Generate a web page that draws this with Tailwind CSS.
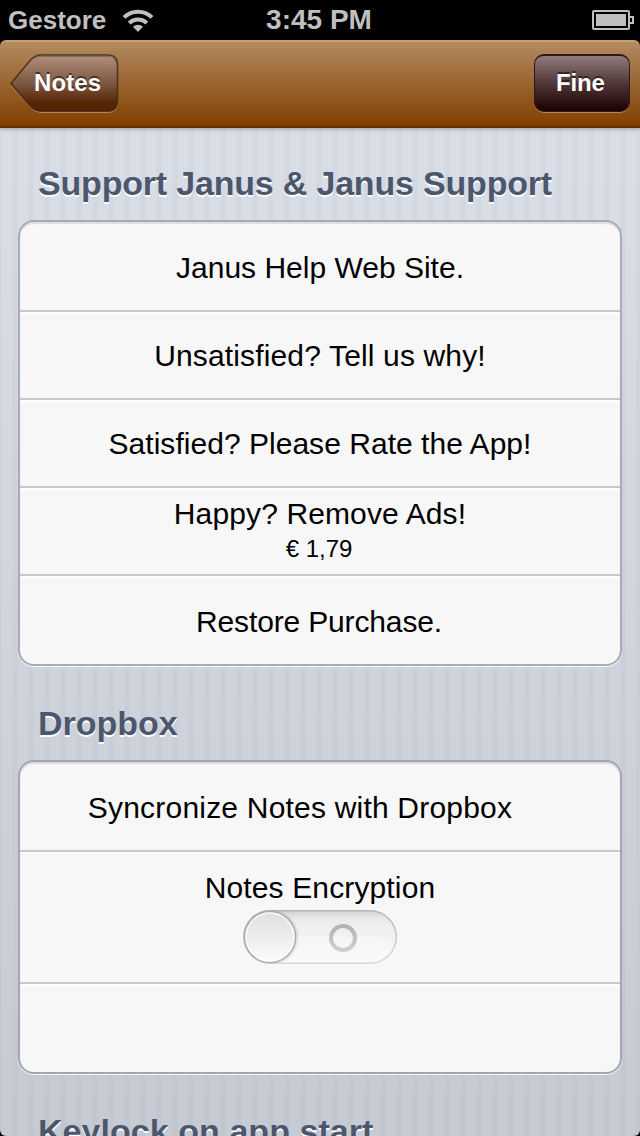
<!DOCTYPE html>
<html lang="it">
<head>
<meta charset="utf-8">
<title>Janus Notes</title>
<script src="https://cdn.jsdelivr.net/npm/@tailwindcss/browser@4"></script>
</head>
<body class="bg-black">
<div class="relative flex h-[1136px] w-[640px] flex-col overflow-hidden bg-black font-['Liberation_Sans',Arial,sans-serif] text-black">
  <!-- Status bar -->
  <header class="grid h-10 shrink-0 grid-cols-3 items-center font-bold text-[#bfbfbf]">
    <div class="flex items-center gap-4 pl-2">
      <span class="text-[26px] leading-10">Gestore</span>
      <svg class="h-[26px] w-8" viewBox="0 0 32 26" fill="none" stroke="#bfbfbf" stroke-width="4">
        <path d="M2 10.400a20 20 0 0 1 28 0"/>
        <path d="M7.200 16.200a12.500 12.500 0 0 1 17.600 0"/>
        <path d="M11 19.800a7.400 7.400 0 0 1 10 0L16 25z" fill="#bfbfbf" stroke="none"/>
      </svg>
    </div>
    <span class="pr-0.5 text-center text-[28px] leading-10 whitespace-nowrap">3:45 PM</span>
    <div class="flex justify-end pr-1.5">
      <svg class="h-5 w-[42px]" viewBox="0 0 42 20">
        <rect x="1" y="1" width="36" height="18" rx="1" fill="none" stroke="#bfbfbf" stroke-width="2"/>
        <rect x="4" y="4" width="30" height="12" fill="#bfbfbf"/>
        <path d="M38 7h3v6h-3" fill="none" stroke="#bfbfbf" stroke-width="2"/>
      </svg>
    </div>
  </header>

  <!-- Navigation bar -->
  <nav class="relative z-10 flex h-[88px] shrink-0 items-start justify-between rounded-t-[6px] border-t-2 border-b-2 border-t-[#c79f77] border-b-[#5f3000] bg-[linear-gradient(#b38a60,#803f00)] pt-3 pr-2.5 pl-2.5 text-2xl font-bold text-white shadow-[0_1px_4px_rgba(0,0,0,0.3)]">
    <div class="relative h-[60px] w-[109px]">
      <svg class="absolute inset-0 h-[60px] w-[109px]" viewBox="0 0 109 60">
        <defs><linearGradient id="back" x1="0" y1="0" x2="0" y2="1"><stop offset="0" stop-color="#b0917e"/><stop offset=".5" stop-color="#7e5742"/><stop offset=".85" stop-color="#562604"/><stop offset="1" stop-color="#532500"/></linearGradient></defs>
        <path d="M1 31.500 20 53Q25 58.500 31 58.500H98Q108 58.500 108 48" fill="none" stroke="#c99562" stroke-opacity=".75"/>
        <path d="M1 29.500 20 6.500Q25 1 31 1H98Q107.500 1 107.500 11V47Q107.500 57 98 57H31Q25 57 20 52Z" fill="url(#back)" stroke="#402817" stroke-opacity=".85" stroke-width="1.500"/>
        <path d="M24 4Q27 2.500 31 2.500H98Q104 2.500 106 8" fill="none" stroke="#402817" stroke-opacity=".35"/>
      </svg>
      <span class="relative block pl-6 leading-[58px] tracking-[0.1px] [text-shadow:0_-2px_0_rgba(0,0,0,0.5)]">Notes</span>
    </div>
    <div class="h-[58px] w-24 rounded-[10px] border border-t-2 border-[#2d181a] bg-[linear-gradient(#8f7c7b,#503636_50%,#1d0000)] pl-[21px] leading-[54px] tracking-[-0.2px] shadow-[0_1px_0_0_rgba(201,149,98,0.8)] [text-shadow:0_-2px_0_rgba(0,0,0,0.5)]">Fine</div>
  </nav>

  <!-- Settings -->
  <main class="relative flex min-h-0 grow flex-col overflow-hidden rounded-b-[6px] bg-[linear-gradient(#d9dee7,#c6cad3)] px-[18px]">
    <div class="absolute inset-0 bg-[linear-gradient(90deg,rgba(105,120,150,0.05)_1px,transparent_2px,transparent_12px,rgba(105,120,150,0.05)_13px)] bg-[length:16px_100%]"></div>

    <h2 class="relative mt-9 h-14 shrink-0 pl-5 text-[34px] leading-[38px] font-bold tracking-[-0.19px] whitespace-nowrap text-[#4c566c] [text-shadow:0_2px_0_white]">Support Janus &amp; Janus Support</h2>
    <section class="relative flex h-[446px] shrink-0 flex-col rounded-[16px] border-2 border-[#a6abb4] bg-[#f7f7f7] text-center text-[30px] whitespace-nowrap shadow-[0_1px_0_rgba(255,255,255,0.9),inset_0_2px_1px_rgba(0,0,0,0.1)]">
      <div class="h-[90px] border-b-2 border-[#c8c8c8] leading-[92px]">Janus Help Web Site.</div>
      <div class="h-[88px] border-t-2 border-b-2 border-t-white border-b-[#c8c8c8] leading-[84px] tracking-[0.15px]">Unsatisfied? Tell us why!</div>
      <div class="h-[88px] border-t-2 border-b-2 border-t-white border-b-[#c8c8c8] leading-[84px] tracking-[0.03px]">Satisfied? Please Rate the App!</div>
      <div class="flex h-[88px] flex-col border-t-2 border-b-2 border-t-white border-b-[#c8c8c8] pt-[5px]"><span class="leading-[38px] tracking-[0.12px]">Happy? Remove Ads!</span><span class="pr-0.5 text-2xl leading-8">€ 1,79</span></div>
      <div class="h-[88px] border-t-2 border-white pr-0.5 leading-[88px] tracking-[-0.15px]">Restore Purchase.</div>
    </section>

    <h2 class="relative mt-[38px] h-14 shrink-0 pl-5 text-[34px] leading-[38px] font-bold whitespace-nowrap text-[#4c566c] [text-shadow:0_2px_0_white]">Dropbox</h2>
    <section class="relative flex h-[314px] shrink-0 flex-col rounded-[16px] border-2 border-[#a1a6b0] bg-[#f7f7f7] text-center text-[30px] whitespace-nowrap shadow-[0_1px_0_rgba(255,255,255,0.9),inset_0_2px_1px_rgba(0,0,0,0.1)]">
      <div class="h-[90px] border-b-2 border-[#c8c8c8] pr-10 leading-[92px] tracking-[0.2px]">Syncronize Notes with Dropbox</div>
      <div class="flex h-[132px] flex-col items-center border-t-2 border-b-2 border-t-white border-b-[#c8c8c8] pt-3.5">
        <span class="h-[42px] leading-10 tracking-[0.13px]">Notes Encryption</span>
        <svg class="h-[54px] w-[154px]" viewBox="0 0 154 54">
          <defs>
            <linearGradient id="track" x1="0" y1="0" x2="0" y2="1"><stop offset="0" stop-color="#d2d2d2"/><stop offset=".14" stop-color="#e9e9e9"/><stop offset=".3" stop-color="#f0f0f0"/><stop offset="1" stop-color="#f7f7f7"/></linearGradient>
            <linearGradient id="edge" x1="0" y1="0" x2="0" y2="1"><stop offset="0" stop-color="#b5b5b5"/><stop offset="1" stop-color="#d9d9d9"/></linearGradient>
            <linearGradient id="knob" x1="0" y1="0" x2="0" y2="1"><stop offset="0" stop-color="#dfdfdf"/><stop offset="1" stop-color="#fbfbfb"/></linearGradient>
            <linearGradient id="ring" x1="0" y1="0" x2="0" y2="1"><stop offset="0" stop-color="#b3b3b3"/><stop offset="1" stop-color="#cecece"/></linearGradient>
            <filter id="soft"><feGaussianBlur stdDeviation="1.500"/></filter>
            <clipPath id="pill"><rect width="154" height="54" rx="27"/></clipPath>
          </defs>
          <rect x=".75" y=".75" width="152.500" height="52.500" rx="26.250" fill="url(#track)" stroke="url(#edge)" stroke-width="1.500"/>
          <g clip-path="url(#pill)">
            <path d="M27 27H135Q146 28 148 38Q144 51 127 52H27Z" fill="#fff" fill-opacity=".3"/>
            <circle cx="28" cy="27" r="26" fill="#888" fill-opacity=".45" filter="url(#soft)"/>
          </g>
          <circle cx="27" cy="27" r="25.500" fill="url(#knob)" stroke="#ababab" stroke-width="1.500"/>
          <circle cx="27" cy="27" r="24" fill="none" stroke="#fff" stroke-opacity=".75" stroke-width="1.500"/>
          <circle cx="100" cy="28" r="12" fill="none" stroke="url(#ring)" stroke-width="4"/>
        </svg>
      </div>
      <div class="h-[88px] rounded-b-[14px] border-t-2 border-white"></div>
    </section>

    <h2 class="relative mt-[38px] h-14 shrink-0 pl-5 text-[34px] leading-[38px] font-bold tracking-[0.05px] whitespace-nowrap text-[#4c566c] [text-shadow:0_2px_0_white]">Keylock on app start</h2>
  </main>
</div>
</body>
</html>
